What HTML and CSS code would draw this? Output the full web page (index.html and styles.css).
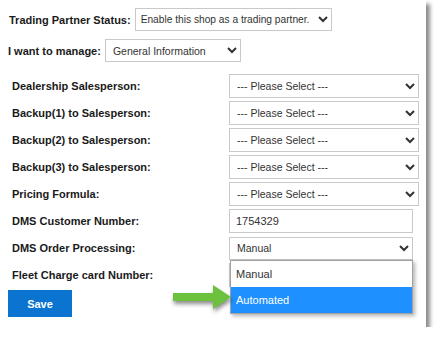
FILE: index.html
```html
<!DOCTYPE html>
<html lang="en">
<head>
  <meta charset="UTF-8" />
  <meta name="viewport" content="width=device-width, initial-scale=1" />
  <title>Trading Partner Settings</title>
  <link rel="stylesheet" href="styles.css">
</head>
<body>
  <div class="panel">
    <div class="top-row">
      <label class="label" for="tp-status">Trading Partner Status:</label>
      <select id="tp-status" class="status-select">
        <option>Enable this shop as a trading partner.</option>
      </select>
    </div>
    <div class="top-row manage-row">
      <label class="label" for="manage">I want to manage:</label>
      <select id="manage" class="manage-select">
        <option>General Information</option>
      </select>
    </div>

    <div class="form-grid">
      <label class="label">Dealership Salesperson:</label>
      <select class="field"><option>--- Please Select ---</option></select>

      <label class="label">Backup(1) to Salesperson:</label>
      <select class="field"><option>--- Please Select ---</option></select>

      <label class="label">Backup(2) to Salesperson:</label>
      <select class="field"><option>--- Please Select ---</option></select>

      <label class="label">Backup(3) to Salesperson:</label>
      <select class="field"><option>--- Please Select ---</option></select>

      <label class="label">Pricing Formula:</label>
      <select class="field"><option>--- Please Select ---</option></select>

      <label class="label">DMS Customer Number:</label>
      <input class="field short" type="text" value="1754329" />

      <label class="label">DMS Order Processing:</label>
      <div class="select-wrap">
        <select class="field short"><option>Manual</option></select>
        <!-- open dropdown list -->
        <ul class="dropdown">
          <li>Manual</li>
          <li class="active">Automated</li>
        </ul>
      </div>

      <label class="label">Fleet Charge card Number:</label>
      <input class="field short" type="text" />
    </div>

    <button class="save-btn" type="button">Save</button>

    <svg class="pointer" width="64" height="30" viewBox="0 0 64 30">
      <polygon points="2,11 42,11 42,3 60,15 42,27 42,19 2,19" fill="#6cc13d" />
    </svg>
  </div>
</body>
</html>
```

FILE: styles.css
```css
* {
  margin: 0;
  padding: 0;
  box-sizing: border-box;
}

body {
  background: #fff;
  font-family: "Liberation Sans", Arial, sans-serif;
}

.panel {
  position: relative;
  width: 426px;
  height: 327px;
  background: #fff;
  padding: 8px 0 0 8px;
  box-shadow: 4px 4px 4px rgba(0, 0, 0, 0.45);
}

.label {
  font-size: 11px;
  font-weight: bold;
  color: #1a1a1a;
}

.top-row {
  display: flex;
  align-items: center;
  gap: 4px;
  height: 23px;
  padding-left: 1px;
}

.manage-row {
  margin-top: 8px;
  padding-left: 0;
}

select,
input {
  font-family: "Liberation Sans", Arial, sans-serif;
  font-size: 10.5px;
  color: #333;
  background: #fff;
  border: 1px solid #c9c9c9;
  border-radius: 0;
  outline: none;
}

select {
  padding-left: 3px;
}

.status-select {
  width: 197px;
  height: 23px;
  padding-left: 1px;
  font-size: 10.2px;
}

.manage-select {
  width: 136px;
  height: 23px;
}

.form-grid {
  display: grid;
  grid-template-columns: 217px 190px;
  grid-auto-rows: 24px;
  row-gap: 3px;
  align-items: center;
  margin-top: 12px;
  padding-left: 4px;
}

.field {
  width: 190px;
  height: 24px;
}

.field.short {
  width: 184px;
}

input.field {
  padding: 0 6px;
  font-size: 11px;
}

.select-wrap {
  position: relative;
  height: 23px;
}

.select-wrap .field {
  height: 23px;
}

.dropdown {
  position: absolute;
  top: 23px;
  left: 1px;
  width: 183px;
  list-style: none;
  background: #fff;
  border: 1px solid #a3a3a3;
  box-shadow: 2px 2px 4px rgba(0, 0, 0, 0.3);
  z-index: 2;
}

.dropdown li {
  height: 26px;
  line-height: 26px;
  padding-left: 5px;
  font-size: 11px;
  color: #333;
}

.dropdown li.active {
  background: #1e90ff;
  color: #fff;
}

.save-btn {
  display: block;
  margin-top: 3px;
  width: 64px;
  height: 27px;
  border: none;
  background: #0a74d0;
  color: #fff;
  font-family: "Liberation Sans", Arial, sans-serif;
  font-size: 11px;
  font-weight: bold;
}

.pointer {
  position: absolute;
  left: 171px;
  top: 282px;
  filter: drop-shadow(1px 3px 2px rgba(0, 0, 0, 0.45));
  z-index: 3;
}
```
